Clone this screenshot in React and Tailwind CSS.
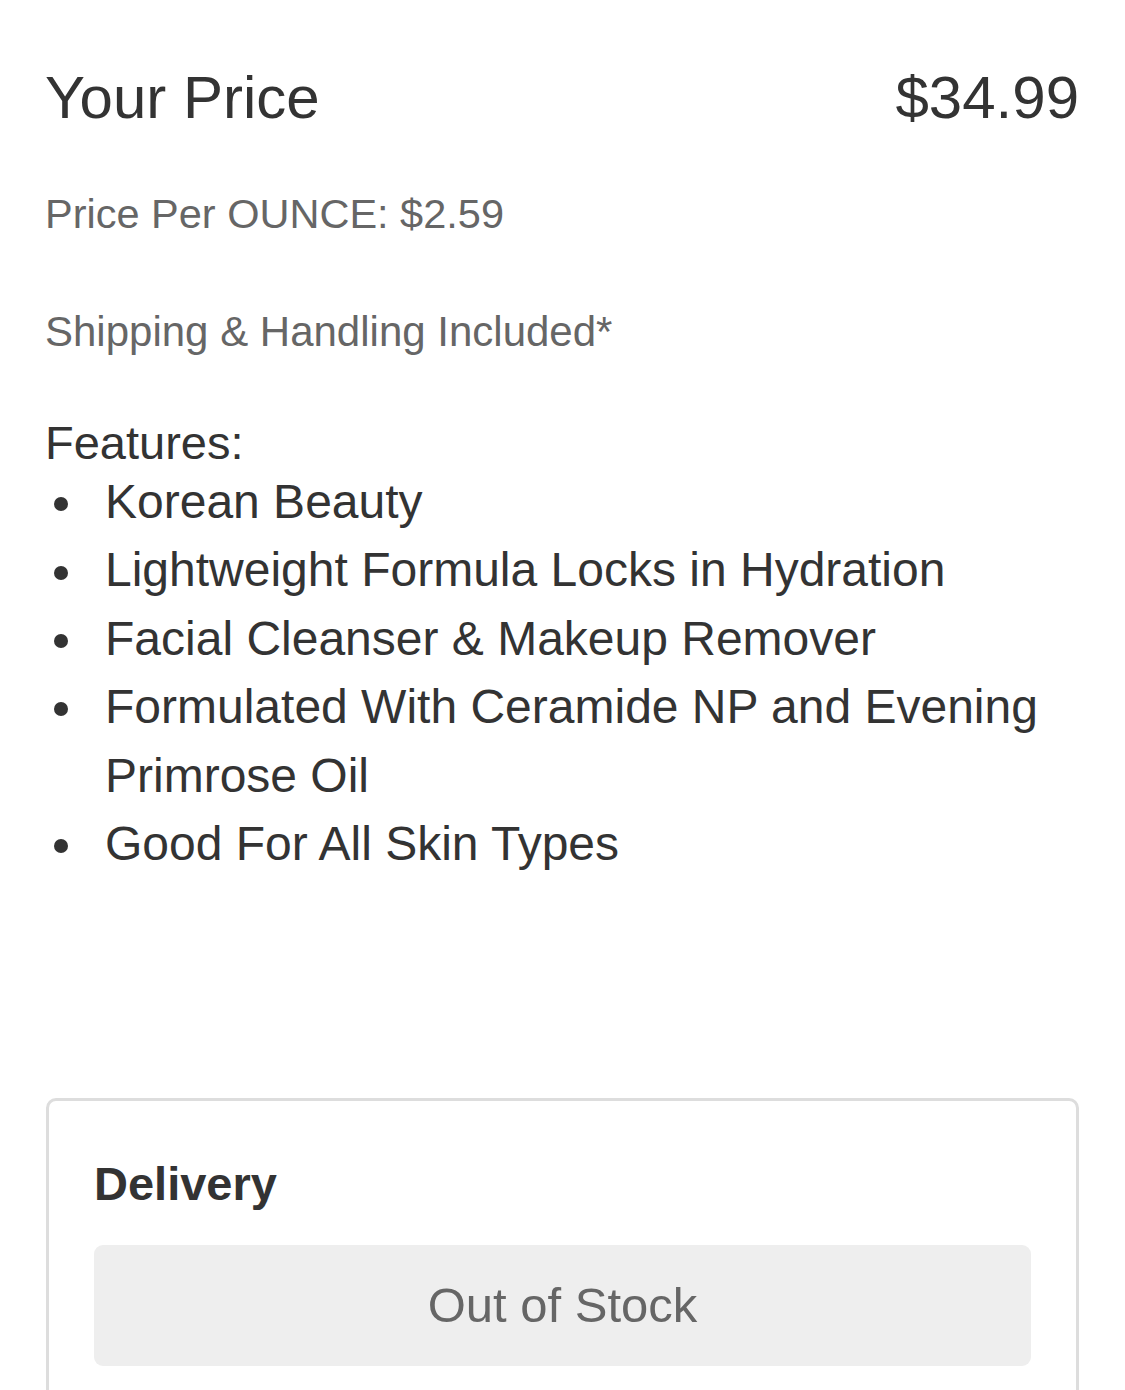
import React from "react";

const features = [
  "Korean Beauty",
  "Lightweight Formula Locks in Hydration",
  "Facial Cleanser & Makeup Remover",
  "Formulated With Ceramide NP and Evening Primrose Oil",
  "Good For All Skin Types",
];

const App = () => {
  return (
    <div className="min-h-screen bg-white px-[46px] font-['Liberation_Sans',Arial,sans-serif] text-[#333333]">
      <div className="flex items-baseline justify-between pt-[68px] text-[60px] leading-[60px]">
        <span className="-ml-[1px]">Your Price</span>
        <span>$34.99</span>
      </div>

      <p className="-ml-[1px] mt-[62px] text-[41.5px] leading-[48px] text-[#666666]">
        Price Per OUNCE: $2.59
      </p>
      <p className="-ml-[1px] mt-[70px] text-[42px] leading-[48px] text-[#666666]">
        Shipping &amp; Handling Included*
      </p>

      <div className="-ml-[1px] mt-[62px] text-[47px]">
        <p className="leading-[50px]">Features:</p>
        <ul className="text-[48px] leading-[68.4px]">
          {features.map((item) => (
            <li key={item} className="flex">
              <span className="flex h-[68.4px] w-[60px] shrink-0 items-center pl-[9px] pt-[4px]">
                <span className="block h-[14px] w-[14px] rounded-full bg-[#333333]" />
              </span>
              <span>{item}</span>
            </li>
          ))}
        </ul>
      </div>

      <div className="mt-[220px] rounded-[10px] border-[3px] border-[#dddddd] px-[45px] pt-[55px] pb-[40px]">
        <h3 className="text-[47px] font-bold leading-[56px]">Delivery</h3>
        <div className="mt-[33px] flex h-[121px] items-center justify-center rounded-[9px] bg-[#eeeeee] text-[49px] text-[#666666]">
          Out of Stock
        </div>
      </div>
    </div>
  );
};

export default App;
